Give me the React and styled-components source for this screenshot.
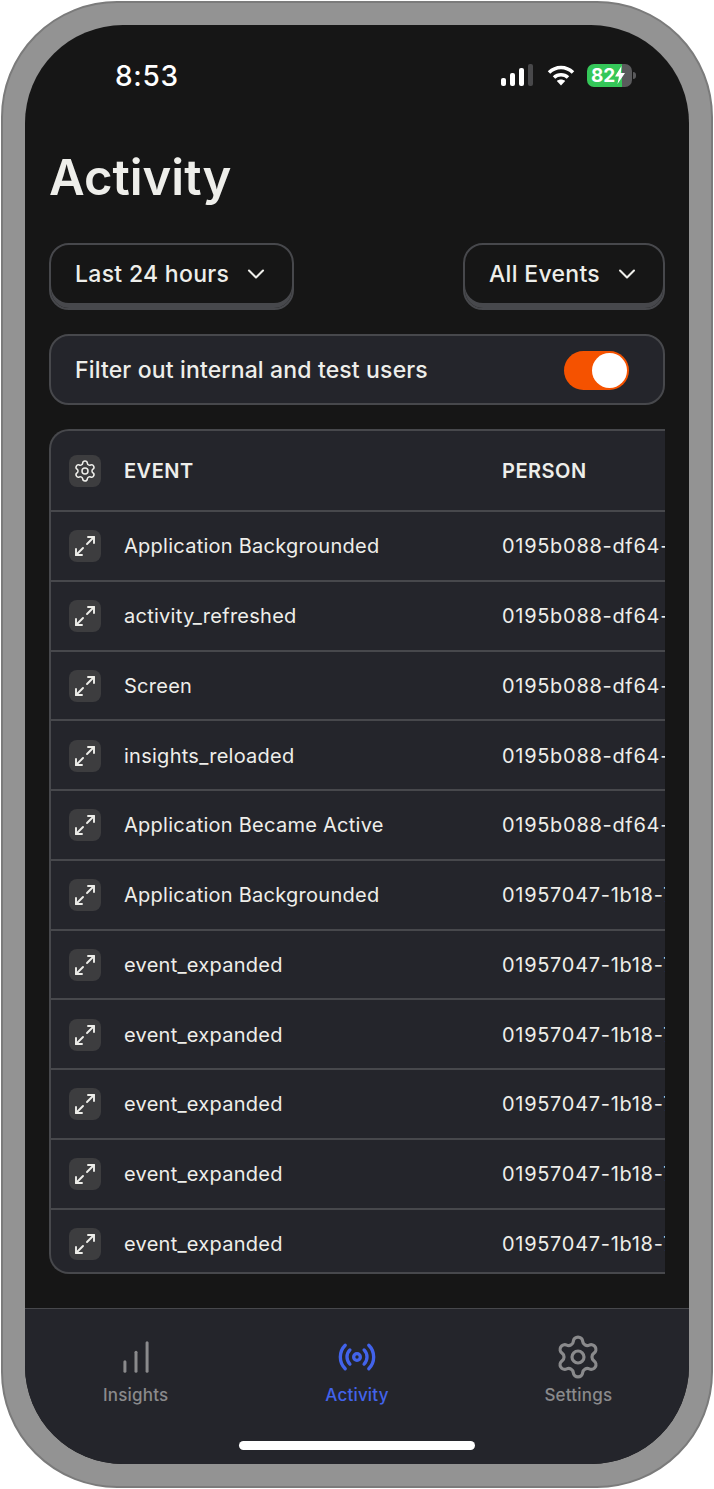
import React from "react";
import styled, { createGlobalStyle } from "styled-components";
import { ChevronDown, Settings, Maximize2, Radio, ChartNoAxesColumnIncreasing } from "lucide-react";

const GlobalStyle = createGlobalStyle`
  html, body {
    margin: 0;
    background: #fff;
  }
  * {
    box-sizing: border-box;
  }
`;

const Frame = styled.div`
  width: 712px;
  height: 1487px;
  margin: 1px;
  padding: 22px;
  background: #939393;
  border: 2px solid #7b7b7b;
  border-radius: 116px;
  font-family: Inter, "Noto Sans", sans-serif;
`;

const Screen = styled.div`
  height: 1439px;
  background: #161616;
  border-radius: 98px;
  overflow: hidden;
  display: flex;
  flex-direction: column;
  color: #eeeeea;
`;

const StatusBar = styled.div`
  height: 72px;
  padding: 28px 57px 0 90px;
  display: flex;
  justify-content: space-between;
  align-items: flex-start;
`;

const Time = styled.div`
  font-size: 28px;
  line-height: 44px;
  font-weight: 500;
  letter-spacing: 0.7px;
  color: #fff;
  margin-top: 1px;
`;

const StatusIcons = styled.div`
  display: flex;
  align-items: center;
  height: 24px;
  margin-top: 10px;
`;

const WifiGap = styled.span`
  width: 13px;
`;

const Battery = styled.div`
  width: 45px;
  height: 23px;
  margin-left: 12px;
  border-radius: 7px;
  background: linear-gradient(to right, #35c759 0 35px, #5a5a5c 35px);
  display: flex;
  align-items: center;
  padding-left: 4px;
  color: #fff;
  font-size: 19px;
  font-weight: 700;
  position: relative;
`;

const BatteryNub = styled.span`
  position: absolute;
  right: -4px;
  top: 8px;
  width: 3px;
  height: 7px;
  border-radius: 0 3px 3px 0;
  background: #5a5a5c;
`;

const Content = styled.main`
  flex: 1;
  padding: 0 24px;
  display: flex;
  flex-direction: column;
`;

const Title = styled.h1`
  margin: 47px 0 0;
  font-size: 49px;
  line-height: 68px;
  font-weight: 600;
`;

const Filters = styled.div`
  margin-top: 31px;
  display: flex;
  justify-content: space-between;
`;

const Dropdown = styled.button`
  width: ${(props) => props.$width}px;
  height: 67px;
  padding: 0 22px 5px 24px;
  display: flex;
  align-items: center;
  justify-content: space-between;
  background: #161616;
  border: 2px solid #47484c;
  border-radius: 20px;
  box-shadow: inset 0 -5px 0 #47484c;
  color: inherit;
  font: 500 23px Inter, sans-serif;
  letter-spacing: 0.3px;
`;

const FilterRow = styled.div`
  margin-top: 24px;
  height: 71px;
  padding: 1px 34px 0 24px;
  display: flex;
  align-items: center;
  justify-content: space-between;
  background: #24252b;
  border: 2px solid #47484c;
  border-radius: 20px;
  font-size: 23px;
  font-weight: 500;
  letter-spacing: 0.15px;
`;

const Toggle = styled.div`
  width: 65px;
  height: 39px;
  padding: 2px;
  border-radius: 20px;
  background: #f55200;
  display: flex;
  justify-content: flex-end;
`;

const Knob = styled.div`
  width: 35px;
  height: 35px;
  border-radius: 50%;
  background: #fff;
`;

const Table = styled.div`
  margin-top: 24px;
  height: 845px;
  background: #24252b;
  border: 2px solid #47484c;
  border-right: 0;
  border-radius: 20px 0 0 20px;
  overflow: hidden;
`;

const Row = styled.div`
  height: ${(props) => (props.$head ? "81px" : "69.75px")};
  display: grid;
  grid-template-columns: 55px 378px 1fr;
  align-items: center;
  padding: 1px 0 0 18px;
  border-bottom: 2px solid #47484c;
  font-size: 20px;
  font-weight: ${(props) => (props.$head ? 600 : 400)};
  letter-spacing: ${(props) => (props.$head ? "0.5px" : "0.26px")};
  white-space: nowrap;
`;

const IconButton = styled.div`
  width: 32px;
  height: 32px;
  border-radius: 8px;
  background: #3d3d3f;
  display: flex;
  align-items: center;
  justify-content: center;
`;

const Person = styled.div`
  overflow: hidden;
  letter-spacing: ${(props) => (props.$head ? "0.5px" : "0.7px")};
`;

const TabBar = styled.nav`
  height: 156px;
  background: #24252b;
  border-top: 1px solid #47484c;
  display: flex;
  flex-direction: column;
  align-items: center;
`;

const Tabs = styled.div`
  width: 100%;
  display: grid;
  grid-template-columns: repeat(3, 1fr);
  padding-top: 27px;
`;

const Tab = styled.div`
  display: flex;
  flex-direction: column;
  align-items: center;
  gap: 6px;
  font-size: 17px;
  line-height: 22px;
  font-weight: 500;
  letter-spacing: 0.2px;
  color: ${(props) => (props.$active ? "#4263eb" : "#8a8a8c")};
`;

const TabIcon = styled.div`
  height: 42px;
  display: flex;
  align-items: center;
  justify-content: center;
`;

const HomeIndicator = styled.div`
  margin-top: 35px;
  width: 236px;
  height: 9px;
  border-radius: 5px;
  background: #fff;
`;

const rows = [
  ["Application Backgrounded", "0195b088-df64-7c1e-a5d2"],
  ["activity_refreshed", "0195b088-df64-7c1e-a5d2"],
  ["Screen", "0195b088-df64-7c1e-a5d2"],
  ["insights_reloaded", "0195b088-df64-7c1e-a5d2"],
  ["Application Became Active", "0195b088-df64-7c1e-a5d2"],
  ["Application Backgrounded", "01957047-1b18-7f3a-92c4"],
  ["event_expanded", "01957047-1b18-7f3a-92c4"],
  ["event_expanded", "01957047-1b18-7f3a-92c4"],
  ["event_expanded", "01957047-1b18-7f3a-92c4"],
  ["event_expanded", "01957047-1b18-7f3a-92c4"],
  ["event_expanded", "01957047-1b18-7f3a-92c4"],
];

const SignalIcon = () => (
  <svg width="33" height="22" viewBox="0 0 33 22">
    <rect x="0" y="14" width="5" height="8" rx="2" fill="#fff" />
    <rect x="9" y="9" width="5" height="13" rx="2" fill="#fff" />
    <rect x="18" y="4" width="5" height="18" rx="2" fill="#fff" />
    <rect x="27" y="0" width="5" height="22" rx="2" fill="#48484a" />
  </svg>
);

const WifiIcon = () => (
  <svg width="28" height="22" viewBox="0 0 28 22" fill="none" stroke="#fff" strokeWidth="3.6">
    <path d="M2 8.5C9 1.8 19 1.8 26 8.5" />
    <path d="M7 13.5C11 9.8 17 9.8 21 13.5" />
    <path d="M14 21.5L9.8 17C12 15 16 15 18.2 17Z" fill="#fff" stroke="none" />
  </svg>
);

const BoltIcon = () => (
  <svg width="10" height="18" viewBox="0 0 10 18">
    <path d="M6.5 0L0 10.5h4L2.5 18 10 7H5.8Z" fill="#fff" />
  </svg>
);

export default function App() {
  return (
    <>
      <GlobalStyle />
      <Frame>
        <Screen>
          <StatusBar>
            <Time>8:53</Time>
            <StatusIcons>
              <SignalIcon />
              <WifiGap />
              <WifiIcon />
              <Battery>
                82
                <BoltIcon />
                <BatteryNub />
              </Battery>
            </StatusIcons>
          </StatusBar>
          <Content>
            <Title>Activity</Title>
            <Filters>
              <Dropdown $width={245}>
                Last 24 hours
                <ChevronDown size={28} strokeWidth={1.8} />
              </Dropdown>
              <Dropdown $width={202}>
                All Events
                <ChevronDown size={28} strokeWidth={1.8} />
              </Dropdown>
            </Filters>
            <FilterRow>
              Filter out internal and test users
              <Toggle>
                <Knob />
              </Toggle>
            </FilterRow>
            <Table>
              <Row $head>
                <IconButton>
                  <Settings size={24} strokeWidth={1.5} />
                </IconButton>
                <div>EVENT</div>
                <Person $head>PERSON</Person>
              </Row>
              {rows.map(([event, person], i) => (
                <Row key={i}>
                  <IconButton>
                    <Maximize2 size={24} strokeWidth={1.9} />
                  </IconButton>
                  <div>{event}</div>
                  <Person>{person}</Person>
                </Row>
              ))}
            </Table>
          </Content>
          <TabBar>
            <Tabs>
              <Tab>
                <TabIcon>
                  <ChartNoAxesColumnIncreasing size={38} strokeWidth={1.9} />
                </TabIcon>
                Insights
              </Tab>
              <Tab $active>
                <TabIcon>
                  <Radio size={40} strokeWidth={2} />
                </TabIcon>
                Activity
              </Tab>
              <Tab>
                <TabIcon>
                  <Settings size={48} strokeWidth={1.6} />
                </TabIcon>
                Settings
              </Tab>
            </Tabs>
            <HomeIndicator />
          </TabBar>
        </Screen>
      </Frame>
    </>
  );
}
